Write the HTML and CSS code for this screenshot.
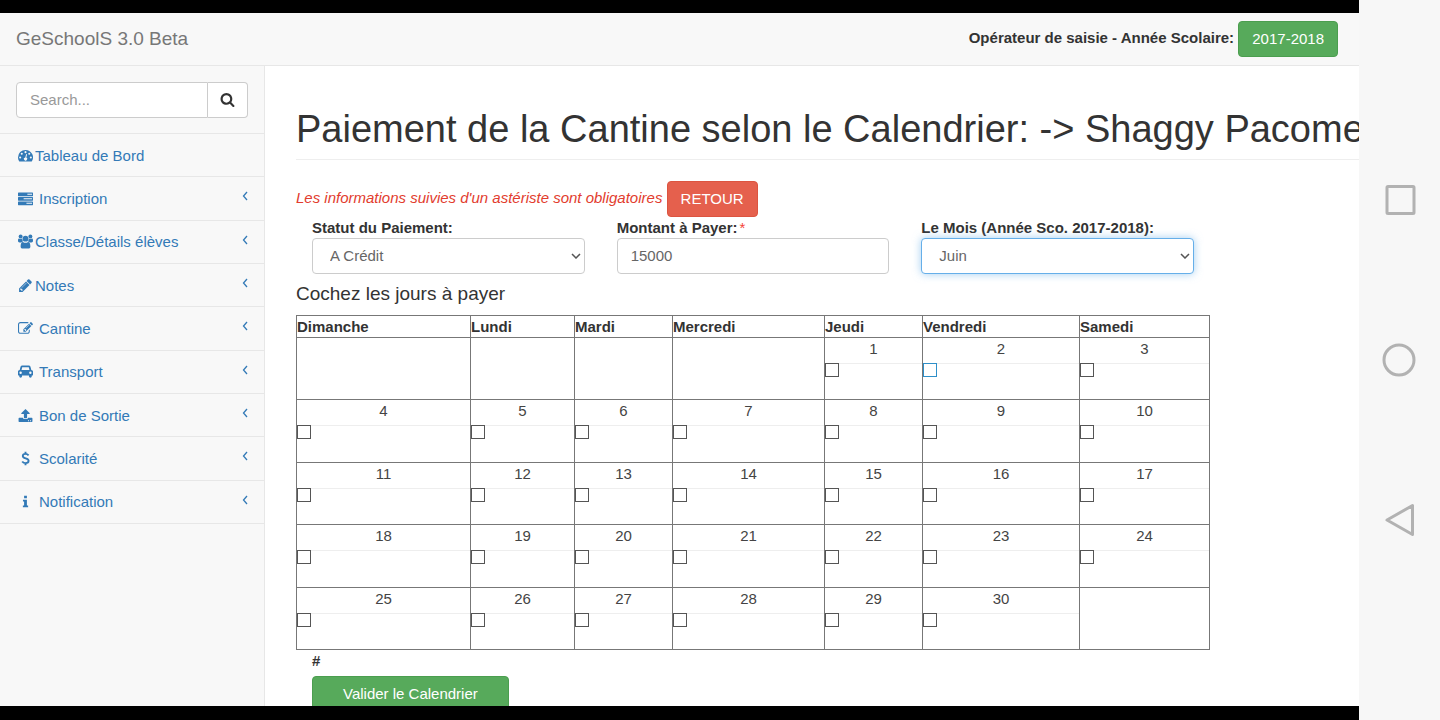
FILE: index.html
```html
<!DOCTYPE html>
<html lang="fr">
<head>
<meta charset="utf-8">
<title>GeSchoolS 3.0 Beta</title>
<link rel="stylesheet" href="styles.css">
</head>
<body>
<div class="device">
  <div class="screen">
    <header class="navbar">
      <a class="brand" href="#">GeSchoolS 3.0 Beta</a>
      <div class="session"><strong>Opérateur de saisie - Année Scolaire:</strong> <button class="btn btn-success" type="button">2017-2018</button></div>
    </header>
    <div class="layout">
      <nav class="sidebar">
        <form class="search">
          <input class="search-input" type="text" placeholder="Search..." aria-label="Search">
          <button class="search-btn" type="button" aria-label="Search"><svg class="icon" viewBox="0 0 1792 1792"><path d="M1216 832q0-185-131.5-316.5t-316.5-131.5-316.5 131.5-131.5 316.5 131.5 316.5 316.5 131.5 316.5-131.5 131.5-316.5zm512 832q0 52-38 90t-90 38q-54 0-90-38l-343-342q-179 124-399 124-143 0-273.5-55.5t-225-150-150-225-55.5-273.5 55.5-273.5 150-225 225-150 273.5-55.5 273.5 55.5 225 150 150 225 55.5 273.5q0 220-124 399l343 343q37 37 37 90z"/></svg></button>
        </form>
        <ul class="menu">
          <li><a class="tight" href="#"><svg class="icon" viewBox="0 0 16 16"><path fill-rule="evenodd" d="M8 2a8 8 0 0 0-8 8c0 1.500.4 2.900 1.200 4.200.1.200.3.300.5.300h12.600c.2 0 .4-.1.500-.3A8 8 0 0 0 8 2zM2.300 9a1.100 1.100 0 1 1 0 2.200 1.100 1.100 0 0 1 0-2.200zM4 5a1.100 1.100 0 1 1 0 2.200A1.100 1.100 0 0 1 4 5zm4-1.700a1.100 1.100 0 1 1 0 2.200 1.100 1.100 0 0 1 0-2.200zM12 5a1.100 1.100 0 1 1 0 2.200A1.100 1.100 0 0 1 12 5zm1.700 4a1.100 1.100 0 1 1 0 2.200 1.100 1.100 0 0 1 0-2.200zM8.700 6.500l1 .3-.9 3.400a1.700 1.700 0 1 1-1-.2z"/></svg><span>Tableau de Bord</span></a></li>
          <li><a href="#"><svg class="icon" viewBox="0 0 16 16"><path fill-rule="evenodd" d="M.5 1.500h15a.5.5 0 0 1 .5.5v3.100a.5.5 0 0 1-.5.5H.5a.5.5 0 0 1-.5-.5V2a.5.5 0 0 1 .5-.5zM10 3v1.100h5V3zM.5 6.300h15a.5.5 0 0 1 .5.5v3.100a.5.5 0 0 1-.5.5H.5a.5.5 0 0 1-.5-.5V6.800a.5.5 0 0 1 .5-.5zM6 7.800v1.100h9V7.800zM.5 11.100h15a.5.5 0 0 1 .5.5v3.100a.5.5 0 0 1-.5.5H.5a.5.5 0 0 1-.5-.5v-3.100a.5.5 0 0 1 .5-.5zM9 12.600v1.100h6v-1.100z"/></svg><span>Inscription</span><svg class="arrow" viewBox="0 0 6 10"><path d="M5 1L1.500 5 5 9"/></svg></a></li>
          <li><a class="tight" href="#"><svg class="icon" viewBox="0 0 16 16"><circle cx="2.800" cy="2.700" r="2.100"/><circle cx="13.200" cy="2.700" r="2.100"/><circle cx="8" cy="5" r="3.100"/><path d="M0 7.500C0 5.500.3 4.800 1 4.800c.8.600 2.400.7 3.500.1 0 1.300.3 2.200 1 3-.9 0-1.600.4-2.200 1.100H1.600C.7 9 0 8.500 0 7.500zM16 7.500c0-2-.3-2.700-1-2.700-.8.600-2.400.7-3.500.1 0 1.300-.3 2.200-1 3 .9 0 1.600.4 2.200 1.100h1.700c.9 0 1.600-.5 1.600-1.500zM2.800 13.300c0-3 .7-4.900 2.500-4.900 1.600 1.400 3.800 1.400 5.400 0 1.800 0 2.500 1.900 2.500 4.900 0 1.500-.9 2.200-2.100 2.200H4.900c-1.200 0-2.100-.7-2.100-2.200z"/></svg><span>Classe/Détails élèves</span><svg class="arrow" viewBox="0 0 6 10"><path d="M5 1L1.500 5 5 9"/></svg></a></li>
          <li><a class="tight" href="#"><svg class="icon" viewBox="0 0 1792 1792"><path d="M491 1536l91-91-235-235-91 91v107h128v128h107zm523-928q0-22-22-22-10 0-17 7l-542 542q-7 7-7 17 0 22 22 22 10 0 17-7l542-542q7-7 7-17zm-54-192l416 416-832 832h-416v-416zm683 96q0 53-37 90l-166 166-416-416 166-165q36-38 90-38 53 0 91 38l235 234q37 39 37 91z"/></svg><span>Notes</span><svg class="arrow" viewBox="0 0 6 10"><path d="M5 1L1.500 5 5 9"/></svg></a></li>
          <li><a href="#"><svg class="icon" viewBox="0 0 1792 1792"><path d="M888 1184l116-116-152-152-116 116v56h96v96h56zm440-720q-16-16-33 1l-350 350q-17 17-1 33t33-1l350-350q17-17 1-33zm80 594v190q0 119-84.5 203.5t-203.5 84.5h-832q-119 0-203.5-84.5t-84.5-203.5v-832q0-119 84.5-203.5t203.5-84.5h832q63 0 117 25 15 7 18 23 3 17-9 29l-49 49q-14 14-32 8-23-6-45-6h-832q-66 0-113 47t-47 113v832q0 66 47 113t113 47h832q66 0 113-47t47-113v-126q0-13 9-22l64-64q15-15 35-7t20 29zm-96-738l288 288-672 672h-288v-288zm444 132l-92 92-288-288 92-92q28-28 68-28t68 28l152 152q28 28 28 68t-28 68z"/></svg><span>Cantine</span><svg class="arrow" viewBox="0 0 6 10"><path d="M5 1L1.500 5 5 9"/></svg></a></li>
          <li><a href="#"><svg class="icon" viewBox="0 0 16 16"><path fill-rule="evenodd" d="M4.600 1.500h6.800c1 0 1.700.6 1.900 1.500l.9 3.300c1 0 1.800.8 1.800 1.800v3.600c0 .3-.2.500-.5.500h-.8v.9a1.500 1.500 0 0 1-3 0v-.9H4.300v.9a1.500 1.500 0 0 1-3 0v-.9H.5a.5.5 0 0 1-.5-.5V8.100c0-1 .8-1.800 1.800-1.800L2.700 3c.2-.9.9-1.500 1.900-1.500zM4.900 3.400c-.3 0-.4.1-.5.4l-.6 2.500h8.400l-.6-2.500c-.1-.3-.2-.4-.5-.4zM2.800 8a1.300 1.300 0 1 0 0 2.600 1.300 1.300 0 0 0 0-2.600zm10.400 0a1.300 1.300 0 1 0 0 2.600 1.300 1.300 0 0 0 0-2.600z"/></svg><span>Transport</span><svg class="arrow" viewBox="0 0 6 10"><path d="M5 1L1.500 5 5 9"/></svg></a></li>
          <li><a href="#"><svg class="icon" viewBox="0 0 16 16"><path fill-rule="evenodd" d="M8 1l4.300 4.300c.5.500.2 1.100-.4 1.100H9.700v3.800c0 .3-.2.600-.6.600H6.900a.6.600 0 0 1-.6-.6V6.400H4.100c-.6 0-.9-.6-.4-1.100zM1.300 10.500h3.900c.3.800.9 1.300 1.700 1.300h2.200c.8 0 1.400-.5 1.700-1.300h3.900c.4 0 .7.300.7.700v3c0 .4-.3.700-.7.700H1.300a.7.700 0 0 1-.7-.7v-3c0-.4.3-.7.700-.7zm9.400 2.500v1h1v-1zm2.200 0v1h1v-1z"/></svg><span>Bon de Sortie</span><svg class="arrow" viewBox="0 0 6 10"><path d="M5 1L1.500 5 5 9"/></svg></a></li>
          <li><a href="#"><svg class="icon line" viewBox="0 0 16 16"><path d="M11.300 4.600C10.500 3.700 9.300 3.100 8 3.100c-1.700 0-2.900.8-2.900 2.200 0 3.200 6.200 1.800 6.200 5.100 0 1.500-1.300 2.500-3.200 2.500-1.500 0-2.800-.6-3.600-1.700M8 .8v2.500M8 12.700v2.500"/></svg><span>Scolarité</span><svg class="arrow" viewBox="0 0 6 10"><path d="M5 1L1.500 5 5 9"/></svg></a></li>
          <li><a href="#"><svg class="icon" viewBox="0 0 16 16"><path d="M6.500 1.800h3v2.600h-3zM5.300 6h4.200v6.200h1.300v2H5.200v-2h1.300V8H5.300z"/></svg><span>Notification</span><svg class="arrow" viewBox="0 0 6 10"><path d="M5 1L1.500 5 5 9"/></svg></a></li>
        </ul>
      </nav>
      <main class="content">
        <h1 class="page-title">Paiement de la Cantine selon le Calendrier: -&gt; Shaggy Pacome</h1>
        <form class="payment">
          <p class="notice"><em>Les informations suivies d'un astériste sont obligatoires</em> <button class="btn btn-danger" type="button">RETOUR</button></p>
          <div class="fields">
            <div class="field"><label for="statut">Statut du Paiement:</label><div class="select"><select id="statut" class="control"><option>A Crédit</option></select><svg class="chevron" viewBox="0 0 10 6"><path d="M1 1l4 4 4-4"/></svg></div></div>
            <div class="field"><label for="montant">Montant à Payer:<span class="required">*</span></label><input id="montant" class="control" type="text" value="15000"></div>
            <div class="field"><label for="mois">Le Mois (Année Sco. 2017-2018):</label><div class="select"><select id="mois" class="control active"><option>Juin</option></select><svg class="chevron" viewBox="0 0 10 6"><path d="M1 1l4 4 4-4"/></svg></div></div>
          </div>
          <h2 class="subtitle">Cochez les jours à payer</h2>
          <table class="calendar">
            <colgroup><col class="c-dim"><col class="c-lun"><col class="c-mar"><col class="c-mer"><col class="c-jeu"><col class="c-ven"><col class="c-sam"></colgroup>
            <thead><tr><th>Dimanche</th><th>Lundi</th><th>Mardi</th><th>Mercredi</th><th>Jeudi</th><th>Vendredi</th><th>Samedi</th></tr></thead>
            <tbody>
              <tr><td></td><td></td><td></td><td></td><td><label for="j1">1</label><input id="j1" type="checkbox"></td><td><label for="j2">2</label><input id="j2" class="hot" type="checkbox"></td><td><label for="j3">3</label><input id="j3" type="checkbox"></td></tr>
              <tr><td><label for="j4">4</label><input id="j4" type="checkbox"></td><td><label for="j5">5</label><input id="j5" type="checkbox"></td><td><label for="j6">6</label><input id="j6" type="checkbox"></td><td><label for="j7">7</label><input id="j7" type="checkbox"></td><td><label for="j8">8</label><input id="j8" type="checkbox"></td><td><label for="j9">9</label><input id="j9" type="checkbox"></td><td><label for="j10">10</label><input id="j10" type="checkbox"></td></tr>
              <tr><td><label for="j11">11</label><input id="j11" type="checkbox"></td><td><label for="j12">12</label><input id="j12" type="checkbox"></td><td><label for="j13">13</label><input id="j13" type="checkbox"></td><td><label for="j14">14</label><input id="j14" type="checkbox"></td><td><label for="j15">15</label><input id="j15" type="checkbox"></td><td><label for="j16">16</label><input id="j16" type="checkbox"></td><td><label for="j17">17</label><input id="j17" type="checkbox"></td></tr>
              <tr><td><label for="j18">18</label><input id="j18" type="checkbox"></td><td><label for="j19">19</label><input id="j19" type="checkbox"></td><td><label for="j20">20</label><input id="j20" type="checkbox"></td><td><label for="j21">21</label><input id="j21" type="checkbox"></td><td><label for="j22">22</label><input id="j22" type="checkbox"></td><td><label for="j23">23</label><input id="j23" type="checkbox"></td><td><label for="j24">24</label><input id="j24" type="checkbox"></td></tr>
              <tr><td><label for="j25">25</label><input id="j25" type="checkbox"></td><td><label for="j26">26</label><input id="j26" type="checkbox"></td><td><label for="j27">27</label><input id="j27" type="checkbox"></td><td><label for="j28">28</label><input id="j28" type="checkbox"></td><td><label for="j29">29</label><input id="j29" type="checkbox"></td><td><label for="j30">30</label><input id="j30" type="checkbox"></td><td></td></tr>
            </tbody>
          </table>
          <div class="submit"><label for="valider">#</label><button id="valider" class="btn btn-success btn-wide" type="button">Valider le Calendrier</button></div>
        </form>
      </main>
    </div>
  </div>
  <div class="rail">
    <button type="button" aria-label="Recents"><svg viewBox="0 0 34 34"><rect x="4" y="3.500" width="27" height="27" rx="1"/></svg></button>
    <button type="button" aria-label="Home"><svg viewBox="0 0 34 34"><circle cx="16" cy="17" r="15"/></svg></button>
    <button type="button" aria-label="Back"><svg viewBox="0 0 34 34"><path d="M29.500 2.500v29L4 17z"/></svg></button>
  </div>
</div>
</body>
</html>
```
FILE: styles.css
```css
* { box-sizing: border-box; }
body { margin: 0; font-family: "Liberation Sans", Arial, sans-serif; font-size: 15px; line-height: 21px; color: #333; background: #fff; }
a { color: #337ab7; text-decoration: none; }
button, input, select { font: inherit; }

.device { display: flex; height: 100vh; overflow: hidden; }
.screen { flex: 1; min-width: 0; display: flex; flex-direction: column; border-top: 13px solid #000; border-bottom: 14px solid #000; }

.navbar { display: flex; align-items: center; justify-content: space-between; flex: none; min-height: 53px; padding: 0 21px 0 16px; background: #f8f8f8; border-bottom: 1px solid #e7e7e7; }
.brand { padding-bottom: 2px; font-size: 19px; color: #777; }

.btn { height: 36px; padding: 0 13px 1px; border: 1px solid; border-radius: 4px; color: #fff; vertical-align: middle; }
.btn-success { background: #57aa5b; border-color: #4b9e4f; }
.btn-danger { background: #e5604d; border-color: #dc5440; }
.btn-wide { padding: 0 30px 1px; }

.layout { display: flex; flex: 1; min-height: 0; overflow: hidden; }
.sidebar { flex: none; width: 265px; background: #f8f8f8; border-right: 1px solid #e7e7e7; }
.search { display: flex; padding: 16px 16px 15px; border-bottom: 1px solid #e7e7e7; }
.search-input { flex: 1; min-width: 0; height: 36px; padding: 0 13px 1px; border: 1px solid #ccc; border-radius: 4px 0 0 4px; background: #fff; }
.search-input::placeholder { color: #999; opacity: 1; }
.search-btn { display: flex; align-items: center; justify-content: center; width: 40px; border: 1px solid #ccc; border-left: 0; border-radius: 0 4px 4px 0; background: #fff; color: #333; padding: 0 0 1px; }
.icon { flex: none; width: 15px; height: 15px; fill: currentColor; }
.icon.line, .arrow path, .chevron path { fill: none; stroke: currentColor; }
.icon.line { stroke-width: 2; }
.menu { display: grid; grid-auto-rows: 1fr; min-height: 390px; margin: 0; padding: 0; list-style: none; }
.menu li { border-bottom: 1px solid #e7e7e7; }
.menu a { display: flex; align-items: center; height: 100%; gap: 6px; padding: 0 16px 0 18px; }
.menu a.tight { gap: 2px; }
.arrow { width: 6px; height: 10px; margin: 0 0 4px auto; }
.arrow path { stroke-width: 1.3; }

.content { flex: 1; min-width: 0; padding: 42px 0 0 31px; overflow: hidden; }
.page-title { margin: 0 0 21px; padding-bottom: 9px; border-bottom: 1px solid #eee; font-size: 38px; line-height: 42px; font-weight: 400; white-space: nowrap; }
.payment { max-width: 914px; }
.notice { margin: 0; color: #e23c2e; }
.fields { display: grid; grid-template-columns: repeat(3, 1fr); }
.field { padding: 0 16px; }
.field label, .submit label { display: block; font-weight: 700; }
.required { margin-left: 2px; color: #f44336; font-weight: 400; }
.control { display: block; width: 100%; height: 36px; padding: 0 13px 1px; border: 1px solid #ccc; border-radius: 4px; background: #fff; color: #666; }
.select { display: grid; align-items: center; }
.select > * { grid-area: 1 / 1; }
.select .control { appearance: none; padding-left: 17px; }
.control.active { border-color: #66afe9; box-shadow: 0 0 8px rgba(102, 175, 233, .6); }
.chevron { justify-self: end; width: 10px; height: 6px; margin-right: 4px; color: #555; pointer-events: none; }
.chevron path { stroke-width: 1.5; }
.subtitle { margin: 9px 0 11px; font-size: 19px; line-height: 21px; font-weight: 400; }

.calendar { width: 100%; height: 335px; table-layout: fixed; border-collapse: collapse; border: 1px solid #555; }
.calendar th, .calendar td { padding: 0; border: 1px solid #777; text-align: left; vertical-align: top; }
.calendar th { height: 22px; line-height: 21px; }
.calendar td label { display: block; height: 26px; line-height: 22px; border-bottom: 1px solid #eee; text-align: center; color: #444; }
.calendar input { display: block; appearance: none; width: 14px; height: 14px; margin: -1px 0 0; border: 1px solid #555; background: #fff; }
.calendar input.hot { border-color: #2e8fc9; }
.c-dim { width: 174px; }
.c-lun { width: 104px; }
.c-mar { width: 98px; }
.c-mer { width: 152px; }
.c-jeu { width: 98px; }
.c-ven { width: 157px; }
.c-sam { width: 130px; }
.submit { padding: 0 16px; }
.submit label { margin-bottom: 5px; }

.rail { flex: none; width: 81px; display: flex; flex-direction: column; align-items: center; justify-content: center; gap: 126px; background: #f7f7f7; }
.rail button { display: flex; padding: 0; border: 0; background: none; }
.rail svg { width: 34px; height: 34px; overflow: visible; fill: none; stroke: #b2b2b2; stroke-width: 3; stroke-linejoin: round; }
```
